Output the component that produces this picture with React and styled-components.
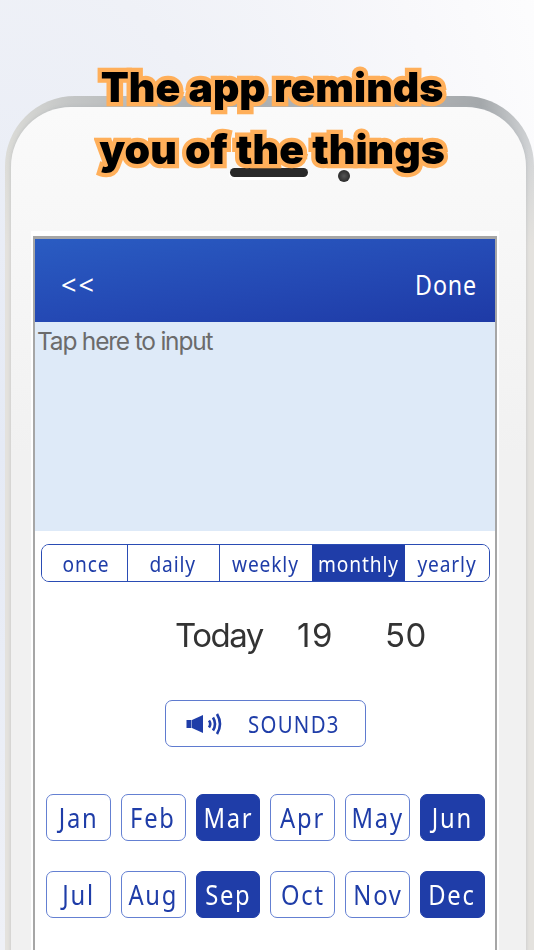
import React from "react";
import styled, { createGlobalStyle } from "styled-components";

const Global = createGlobalStyle`
  html, body { margin: 0; padding: 0; }
  body { width: 534px; height: 950px; overflow: hidden; font-family: "Noto Sans", sans-serif; }
`;

const Page = styled.div`
  position: relative;
  width: 534px;
  height: 950px;
  overflow: hidden;
  box-sizing: border-box;
  padding: 96px 0 0 5px;
  background: radial-gradient(ellipse 640px 1100px at 0 450px, #e5eaf5 0%, #eff1f7 45%, #f8f8fb 75%, #fefefe 100%);
`;

const Title = styled.h1`
  position: absolute;
  z-index: 2;
  top: 56px;
  left: 0;
  width: 544px;
  margin: 0;
  text-align: center;
  font-family: Inter, sans-serif;
  font-size: 41px;
  line-height: 62px;
  font-weight: 900;
  color: #000;
  -webkit-text-stroke: 8.5px #ffaf5a;
  paint-order: stroke fill;
  filter: blur(0.35px);
`;

const PhoneShell = styled.div`
  box-sizing: border-box;
  height: 880px;
  padding: 11px 8px 0 6px;
  border-radius: 70px 70px 0 0;
  background:
    linear-gradient(180deg, rgba(226, 225, 221, 0) 50px, #e4e2de 150px),
    linear-gradient(90deg, #dcdcd8 0%, #c4c6c6 12%, #a9adb0 40%, #b5b8ba 70%, #a4a8ab 90%, #d4d6d8 100%);
  filter: blur(0.4px);
`;

const PhoneFace = styled.div`
  position: relative;
  box-sizing: border-box;
  height: 100%;
  padding: 129px 29px 0 22px;
  border-radius: 60px 60px 0 0;
  background: linear-gradient(180deg, #fafafa 0%, #f7f7f7 15%, #f1f1f1 40%);
  box-shadow: 0 0 3px 1px rgba(170, 175, 180, 0.35);
`;

const Earpiece = styled.div`
  position: absolute;
  top: 61px;
  left: 219px;
  width: 78px;
  height: 9px;
  border-radius: 5px;
  background: #2a2a2a;
  box-shadow: 0 2px 0 1px #fff;
`;

const Camera = styled.div`
  position: absolute;
  top: 63px;
  left: 327px;
  width: 12px;
  height: 12px;
  border-radius: 50%;
  background: radial-gradient(circle, #555 0%, #2c2c2c 70%);
`;

const Screen = styled.div`
  box-sizing: border-box;
  height: 740px;
  background: #fff;
  border: solid #a6a6a6;
  border-width: 3px 2px 0 2px;
  box-shadow: 0 -3px 0 2px #fff;
`;

const Header = styled.header`
  height: 83px;
  box-sizing: border-box;
  display: flex;
  align-items: center;
  justify-content: space-between;
  padding: 8px 18px 0 26px;
  color: #fff;
  background: linear-gradient(172deg, #2a5cc2 0%, #2449b4 55%, #1e3aa6 100%);
`;

const HeaderText = styled.span`
  display: inline-block;
  font-size: 27px;
  letter-spacing: ${(p) => p.$spacing || "1px"};
  line-height: 30px;
  font-weight: 400;
  transform: scaleX(${(p) => p.$scale || 1});
  transform-origin: right center;
`;

const Memo = styled.div`
  height: 209px;
  box-sizing: border-box;
  padding: 3px 0 0 2px;
  background: #deeaf8;
  color: #6b6b6b;
  font-family: Inter, sans-serif;
  font-size: 24.5px;
  line-height: 32px;
  letter-spacing: -1.2px;
`;

const Tabs = styled.div`
  display: grid;
  grid-template-columns: 85.5px 92px 92px 93px 1fr;
  margin: 13px 5px 0 6px;
  height: 38px;
  box-sizing: border-box;
  border: 1.5px solid #2a4cb4;
  border-radius: 8px;
  overflow: hidden;
`;

const Tab = styled.div`
  display: flex;
  align-items: center;
  justify-content: center;
  padding-bottom: 1px;
  font-size: 22px;
  line-height: 1;
  letter-spacing: 1px;
  color: ${(p) => (p.$active ? "#fff" : "#1f3da8")};
  background: ${(p) => (p.$active ? "#1f3da8" : "#fff")};
  border-right: ${(p) => (p.$divider ? "1.5px solid #2a4cb4" : "none")};
  &:first-child { padding-left: 4px; }
`;

const TabLabel = styled.span`
  display: inline-block;
  transform: scaleX(0.87);
  white-space: nowrap;
`;

const TimeRow = styled.div`
  display: flex;
  align-items: center;
  height: 40px;
  margin-top: 33px;
  padding-left: 140px;
  font-family: Inter, sans-serif;
  font-size: 33px;
  color: #333;
`;

const TimeItem = styled.span`
  width: ${(p) => p.$w}px;
  letter-spacing: ${(p) => p.$spacing};
`;

const SoundButton = styled.div`
  display: flex;
  align-items: center;
  box-sizing: border-box;
  width: 201px;
  height: 47px;
  margin: 45px 0 0 130px;
  padding-left: 20px;
  border: 1.5px solid #5f7bcf;
  border-radius: 7px;
  color: #1f3da8;
`;

const SoundLabel = styled.span`
  margin-left: 24px;
  font-size: 24px;
  line-height: 1;
  letter-spacing: 1.5px;
  display: inline-block;
  transform: scaleX(0.85);
  transform-origin: left center;
`;

const Months = styled.div`
  display: grid;
  grid-template-columns: repeat(6, 64.8px);
  column-gap: 10px;
  row-gap: 30px;
  margin: 47px 0 0 11px;
`;

const Month = styled.div`
  display: flex;
  align-items: center;
  justify-content: center;
  box-sizing: border-box;
  height: 47px;
  padding-bottom: 1px;
  border: 1.5px solid ${(p) => (p.$active ? "#1f3da8" : "#6480d2")};
  border-radius: 7px;
  color: ${(p) => (p.$active ? "#fff" : "#1f3da8")};
  background: ${(p) => (p.$active ? "#1f3da8" : "#fff")};
  font-size: 27px;
  line-height: 1;
  letter-spacing: 2px;
`;

const MonthLabel = styled.span`
  display: inline-block;
  transform: scaleX(0.88);
`;

const SpeakerIcon = () => (
  <svg width="38" height="24" viewBox="0 0 38 24" fill="none">
    <rect x="0.5" y="8" width="5" height="8" fill="#1f3da8" />
    <path d="M6 8 L17 3 V21 L6 16 Z" fill="#1f3da8" />
    <path d="M23 8.5 Q25.5 12 23 15.5" stroke="#1f3da8" strokeWidth="2.6" />
    <path d="M27 5.5 Q31 12 27 18.5" stroke="#1f3da8" strokeWidth="2.6" />
    <path d="M31 2 Q37 12 31 22" stroke="#1f3da8" strokeWidth="2.6" />
  </svg>
);

const tabs = ["once", "daily", "weekly", "monthly", "yearly"];
const months = ["Jan", "Feb", "Mar", "Apr", "May", "Jun", "Jul", "Aug", "Sep", "Oct", "Nov", "Dec"];
const activeMonths = ["Mar", "Jun", "Sep", "Dec"];

export default function App() {
  return (
    <Page>
      <Global />
      <Title>
        The app reminds
        <br />
        you of the things
      </Title>
      <PhoneShell>
        <PhoneFace>
          <Earpiece />
          <Camera />
          <Screen>
            <Header>
              <HeaderText $spacing="2px">&lt;&lt;</HeaderText>
              <HeaderText $scale={0.86}>Done</HeaderText>
            </Header>
            <Memo>Tap here to input</Memo>
            <Tabs>
              {tabs.map((t, i) => (
                <Tab key={t} $active={t === "monthly"} $divider={i < 2}>
                  <TabLabel>{t}</TabLabel>
                </Tab>
              ))}
            </Tabs>
            <TimeRow>
              <TimeItem $w={122} $spacing="-1.5px">Today</TimeItem>
              <TimeItem $w={88} $spacing="1.5px">19</TimeItem>
              <TimeItem $w={60} $spacing="0.5px">50</TimeItem>
            </TimeRow>
            <SoundButton>
              <SpeakerIcon />
              <SoundLabel>SOUND3</SoundLabel>
            </SoundButton>
            <Months>
              {months.map((m) => (
                <Month key={m} $active={activeMonths.includes(m)}>
                  <MonthLabel>{m}</MonthLabel>
                </Month>
              ))}
            </Months>
          </Screen>
        </PhoneFace>
      </PhoneShell>
    </Page>
  );
}
